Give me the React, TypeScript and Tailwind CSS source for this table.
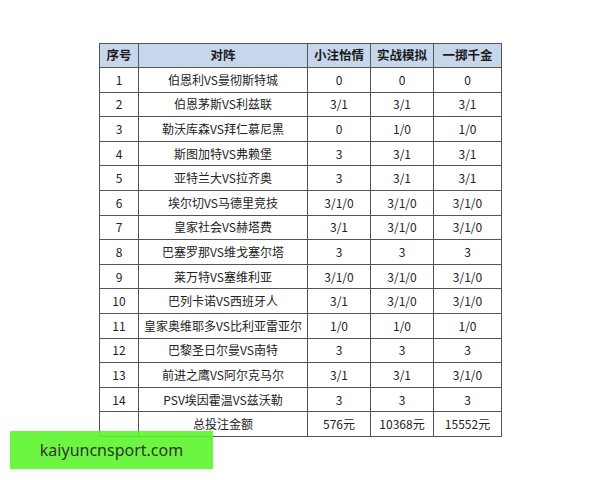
const rows: [string, string, string, string, string][] = [
  ["1", "伯恩利VS曼彻斯特城", "0", "0", "0"],
  ["2", "伯恩茅斯VS利兹联", "3/1", "3/1", "3/1"],
  ["3", "勒沃库森VS拜仁慕尼黑", "0", "1/0", "1/0"],
  ["4", "斯图加特VS弗赖堡", "3", "3/1", "3/1"],
  ["5", "亚特兰大VS拉齐奥", "3", "3/1", "3/1"],
  ["6", "埃尔切VS马德里竞技", "3/1/0", "3/1/0", "3/1/0"],
  ["7", "皇家社会VS赫塔费", "3/1", "3/1/0", "3/1/0"],
  ["8", "巴塞罗那VS维戈塞尔塔", "3", "3", "3"],
  ["9", "莱万特VS塞维利亚", "3/1/0", "3/1/0", "3/1/0"],
  ["10", "巴列卡诺VS西班牙人", "3/1", "3/1/0", "3/1/0"],
  ["11", "皇家奥维耶多VS比利亚雷亚尔", "1/0", "1/0", "1/0"],
  ["12", "巴黎圣日尔曼VS南特", "3", "3", "3"],
  ["13", "前进之鹰VS阿尔克马尔", "3/1", "3/1", "3/1/0"],
  ["14", "PSV埃因霍温VS兹沃勒", "3", "3", "3"],
  ["", "总投注金额", "576元", "10368元", "15552元"],
];

const headers = ["序号", "对阵", "小注怡情", "实战模拟", "一掷千金"];

export default function App() {
  return (
    <div className="relative w-[600px] h-[480px] bg-white overflow-hidden" style={{ fontFamily: '"Noto Sans CJK SC", "Noto Sans", sans-serif' }}>
      <div className="pt-[43px] pl-[99px]">
        <table className="border-collapse table-fixed w-[402px] text-[12px] text-[#222] border border-[#555]">
          <colgroup>
            <col className="w-[39px]" />
            <col className="w-[169px]" />
            <col className="w-[63px]" />
            <col className="w-[63px]" />
            <col className="w-[68px]" />
          </colgroup>
          <thead>
            <tr className="h-[24px] bg-[#c7d6ea]">
              {headers.map((h) => (
                <th key={h} className="border border-[#555] font-bold text-[12.5px] text-[#1a1a1a] p-0 leading-none">{h}</th>
              ))}
            </tr>
          </thead>
          <tbody>
            {rows.map((r, i) => (
              <tr key={i} className="h-[24.6px]">
                {r.map((c, j) => (
                  <td key={j} className="border border-[#555] text-center p-0 leading-none">{c}</td>
                ))}
              </tr>
            ))}
          </tbody>
        </table>
      </div>

      {/* watermark banner over the table */}
      <div className="absolute left-[10px] top-[431px] w-[203px] h-[38px] bg-[#5cf52c]/90 flex items-center justify-center">
        <span className="text-[16px] text-[#333]" style={{ fontFamily: '"Noto Sans", sans-serif' }}>kaiyuncnsport.com</span>
      </div>
    </div>
  );
}
